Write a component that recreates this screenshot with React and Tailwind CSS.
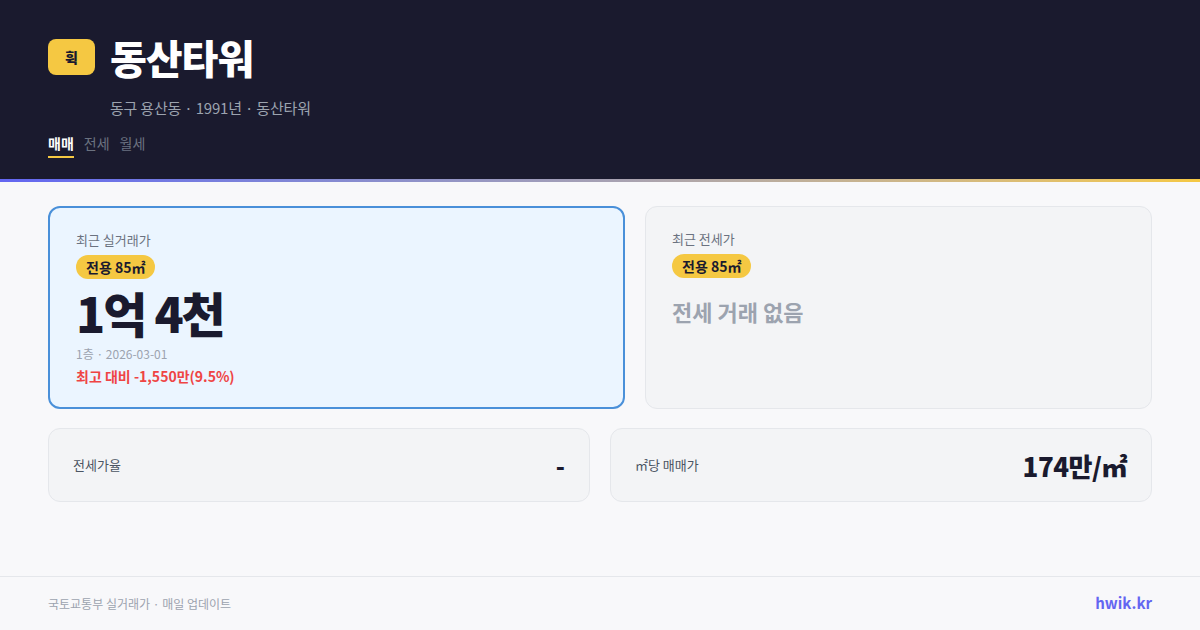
import React from 'react';

const font = { fontFamily: '"Noto Sans CJK KR", "Noto Sans", sans-serif' };

const AreaBadge = () => (
    <span className="inline-flex items-center h-[24px] px-[10px] rounded-full bg-[#f5c842] text-[14px] font-bold text-[#1a1a2e] leading-none">
        전용 85㎡
    </span>
);

export default function App() {
    const tabs = ['매매', '전세', '월세'];

    return (
        <div className="w-[1200px] h-[630px] bg-[#f8f8fa] flex flex-col" style={font}>
            {/* Header */}
            <div className="bg-[#1a1a2e] h-[179px] px-[48px] pt-[31px] flex flex-col">
                <div className="flex items-center gap-[15px]">
                    <div className="w-[47px] h-[36px] rounded-[8px] bg-[#f5c842] flex items-center justify-center text-[14px] font-black text-[#1a1a2e]">
                        휙
                    </div>
                    <h1 className="text-[40px] font-black text-white leading-[52px] tracking-[-1px]">동산타워</h1>
                </div>
                <p className="ml-[62px] mt-[15px] text-[15px] text-[#9ca3af] leading-[20px] tracking-[-0.2px]">동구 용산동 · 1991년 · 동산타워</p>
                <div className="flex gap-[10px] mt-[15px]">
                    {tabs.map((t, i) => (
                        <div key={t} className={`text-[14px] leading-[20px] pb-[3px] border-b-2 ${i === 0 ? 'text-white font-bold border-[#f5c842]' : 'text-[#6b7280] border-transparent'}`}>
                            {t}
                        </div>
                    ))}
                </div>
            </div>
            <div className="h-[3px] bg-gradient-to-r from-[#6366f1] to-[#f5c842]" />

            {/* Body */}
            <div className="flex-1 px-[48px] pt-[24px]">
                <div className="flex gap-[20px]">
                    <div className="w-[577px] h-[203px] rounded-[12px] border-2 border-[#4a90d9] bg-[#ebf5ff] pl-[26px] pt-[23px]">
                        <p className="text-[13px] text-[#6b7280] leading-[18px]">최근 실거래가</p>
                        <div className="mt-[5px]"><AreaBadge /></div>
                        <p className="text-[48px] font-black text-[#1a1a2e] leading-[56px] mt-[5px] tracking-[-2px]">1억 4천</p>
                        <p className="text-[12px] text-[#9ca3af] leading-[16px] mt-[6px]">1층 · 2026-03-01</p>
                        <p className="text-[14px] font-semibold text-[#ef4444] leading-[20px] mt-[4px]">최고 대비 -1,550만(9.5%)</p>
                    </div>
                    <div className="flex-1 h-[203px] rounded-[12px] border border-[#e5e7eb] bg-[#f3f4f6] pl-[26px] pt-[23px]">
                        <p className="text-[13px] text-[#6b7280] leading-[18px]">최근 전세가</p>
                        <div className="mt-[5px]"><AreaBadge /></div>
                        <p className="text-[22px] font-bold text-[#9ca3af] leading-[30px] mt-[18px]">전세 거래 없음</p>
                    </div>
                </div>

                <div className="grid grid-cols-2 gap-[20px] mt-[19px]">
                    <div className="h-[74px] rounded-[12px] border border-[#e5e7eb] bg-[#f3f4f6] px-[24px] flex items-center justify-between">
                        <span className="text-[13px] text-[#4b5563]">전세가율</span>
                        <span className="text-[24px] font-black text-[#1a1a2e]">-</span>
                    </div>
                    <div className="h-[74px] rounded-[12px] border border-[#e5e7eb] bg-[#f3f4f6] px-[24px] flex items-center justify-between">
                        <span className="text-[13px] text-[#4b5563]">㎡당 매매가</span>
                        <span className="text-[26px] font-black text-[#1a1a2e] tracking-[-0.5px]">174만/㎡</span>
                    </div>
                </div>
            </div>

            {/* Footer */}
            <div className="h-[54px] border-t border-[#e5e7eb] px-[48px] flex items-center justify-between">
                <span className="text-[12px] text-[#9ca3af]">국토교통부 실거래가 · 매일 업데이트</span>
                <span className="text-[15px] font-bold text-[#6366f1]">hwik.kr</span>
            </div>
        </div>
    );
}
